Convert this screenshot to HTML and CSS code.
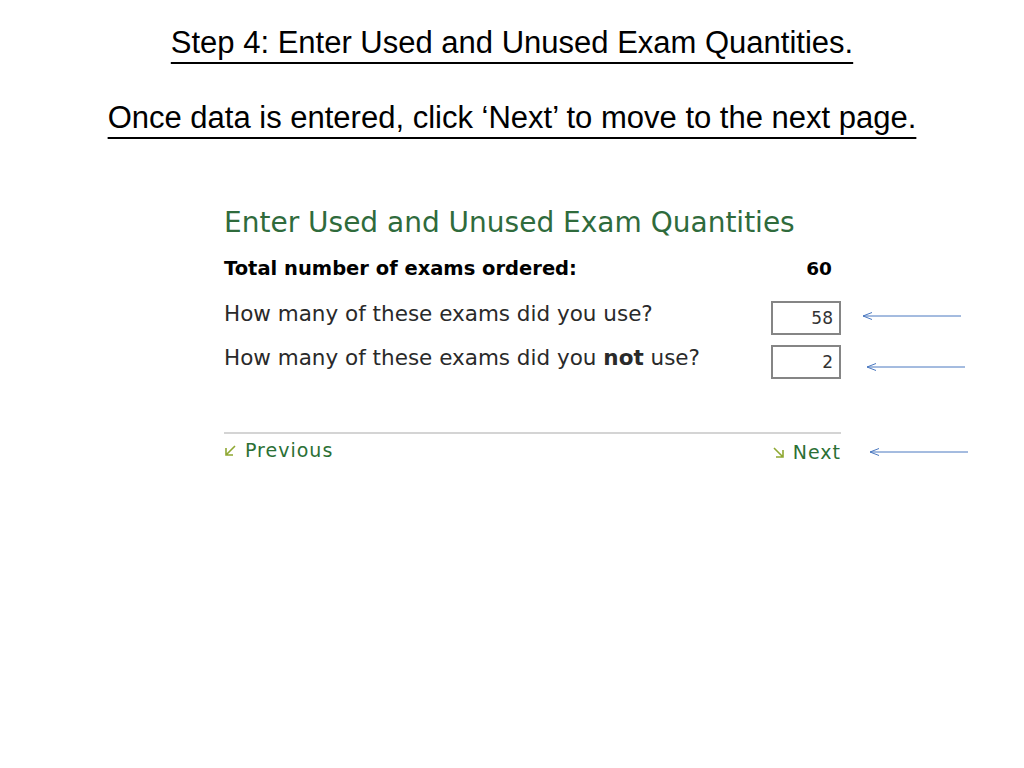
FILE: index.html
```html
<!DOCTYPE html>
<html lang="en">
<head>
<meta charset="UTF-8">
<title>Step 4</title>
<link rel="stylesheet" href="styles.css">
</head>
<body>
<div class="slide-head">
<p class="step">Step 4: Enter Used and Unused Exam Quantities.</p>
<p class="note">Once data is entered, click ‘Next’ to move to the next page.</p>
</div>

<div class="panel">
<h2 class="title">Enter Used and Unused Exam Quantities</h2>

<div class="row total">
<div class="form-part">
<span class="label">Total number of exams ordered:</span>
<span class="value">60</span>
</div>
</div>

<div class="row used">
<div class="form-part">
<span class="label">How many of these exams did you use?</span>
<input class="qty" type="text" value="58">
</div>
<svg class="pointer p1" width="100" height="10" viewBox="0 0 100 10"><path d="M1 5H99M1 5L10 1.5M1 5L10 8.5" fill="none" stroke="#4a78c0" stroke-width="1"/></svg>
</div>

<div class="row unused">
<div class="form-part">
<span class="label">How many of these exams did you <b>not</b> use?</span>
<input class="qty" type="text" value="2">
</div>
<svg class="pointer p2" width="100" height="10" viewBox="0 0 100 10"><path d="M1 5H99M1 5L10 1.5M1 5L10 8.5" fill="none" stroke="#4a78c0" stroke-width="1"/></svg>
</div>

<div class="row nav">
<div class="form-part links">
<a class="link" href="#"><svg width="13" height="13" viewBox="0 0 13 13"><path d="M11 2L2 11M2 4V11H9" fill="none" stroke="#8fa832" stroke-width="1.6"/></svg>Previous</a>
<a class="link next" href="#"><svg width="13" height="13" viewBox="0 0 13 13"><path d="M2 2L11 11M11 4V11H4" fill="none" stroke="#8fa832" stroke-width="1.6"/></svg>Next</a>
</div>
<svg class="pointer p3" width="100" height="10" viewBox="0 0 100 10"><path d="M1 5H99M1 5L10 1.5M1 5L10 8.5" fill="none" stroke="#4a78c0" stroke-width="1"/></svg>
</div>
</div>
</body>
</html>
```

FILE: styles.css
```css
body {
margin: 0;
background: #fff;
font-family: "Liberation Sans", Arial, sans-serif;
color: #000;
}

.slide-head {
text-align: center;
padding-top: 23px;
}

.slide-head p {
margin: 0;
font-size: 31px;
line-height: 40px;
text-decoration: underline;
text-decoration-thickness: 2px;
text-underline-offset: 9px;
}

.slide-head .note {
margin-top: 35px;
}

/* form screenshot part */
.panel {
margin: 68px 0 0 224px;
font-family: "DejaVu Sans", Verdana, sans-serif;
}

.title {
margin: 0 0 17px;
font-weight: normal;
font-size: 28px;
line-height: 34px;
color: #2f6b3c;
}

.row {
display: flex;
align-items: flex-start;
}

.form-part {
width: 617px;
display: flex;
align-items: flex-start;
justify-content: space-between;
}

.label {
font-size: 21.5px;
line-height: 25px;
color: #2a2a2a;
}

.total .label {
font-size: 19.5px;
line-height: 24px;
font-weight: bold;
color: #000;
}

.value {
font-size: 18.5px;
line-height: 24px;
font-weight: bold;
margin-right: 9px;
}

.used {
margin-top: 20px;
}

.unused {
margin-top: 10px;
}

.qty {
width: 70px;
height: 34px;
box-sizing: border-box;
border: 2px solid #858585;
padding: 0 6px;
text-align: right;
font-family: inherit;
font-size: 17px;
color: #333;
}

.pointer {
flex: none;
}

.p1 {
margin: 10px 0 0 21px;
}

.p2 {
margin: 17px 0 0 25px;
}

.p3 {
margin: 15px 0 0 28px;
}

.nav {
margin-top: 53px;
}

.links {
border-top: 2px solid #d4d4d4;
padding-top: 5px;
}

.link {
font-size: 19px;
line-height: 22px;
letter-spacing: 1px;
color: #2b7035;
text-decoration: none;
display: flex;
align-items: center;
gap: 8px;
}

.link.next {
margin-top: 2px;
}
```
